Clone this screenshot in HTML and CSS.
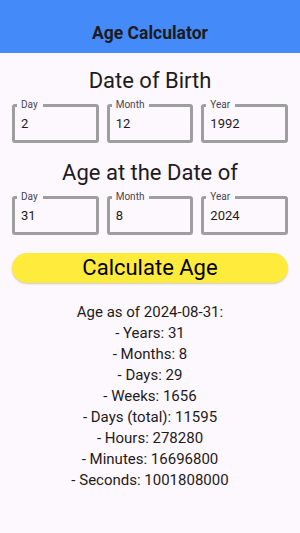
FILE: index.html
```html
<!DOCTYPE html>
<html lang="en">
<head>
  <meta charset="UTF-8" />
  <meta name="viewport" content="width=device-width, initial-scale=1.0"/>
  <title>Age Calculator</title>
  <link rel="stylesheet" href="styles.css">
</head>
<body>
  <header class="app-bar">
    <h1>Age Calculator</h1>
  </header>

  <main class="content">
    <h2 class="section-title">Date of Birth</h2>
    <div class="field-row">
      <div class="field">
        <label>Day</label>
        <input type="text" value="2">
      </div>
      <div class="field">
        <label>Month</label>
        <input type="text" value="12">
      </div>
      <div class="field">
        <label>Year</label>
        <input type="text" value="1992">
      </div>
    </div>

    <h2 class="section-title second">Age at the Date of</h2>
    <div class="field-row">
      <div class="field">
        <label>Day</label>
        <input type="text" value="31">
      </div>
      <div class="field">
        <label>Month</label>
        <input type="text" value="8">
      </div>
      <div class="field">
        <label>Year</label>
        <input type="text" value="2024">
      </div>
    </div>

    <div class="button-row">
      <button class="calc-btn">Calculate Age</button>
    </div>

    <div class="result">
      <p>Age as of 2024-08-31:</p>
      <p>- Years: 31</p>
      <p>- Months: 8</p>
      <p>- Days: 29</p>
      <p>- Weeks: 1656</p>
      <p>- Days (total): 11595</p>
      <p>- Hours: 278280</p>
      <p>- Minutes: 16696800</p>
      <p>- Seconds: 1001808000</p>
    </div>
  </main>
</body>
</html>
```

FILE: styles.css
```css
* {
  box-sizing: border-box;
}

body {
  margin: 0;
  font-family: Roboto, 'Noto Sans', sans-serif;
  background: #fdf7fe;
  color: #1d1b20;
  width: 300px;
  min-height: 533px;
}

.app-bar {
  background: #448af8;
  height: 53px;
  padding-top: 13px;
}

.app-bar h1 {
  margin: 0;
  text-align: center;
  font-size: 17.5px;
  font-weight: 700;
  line-height: 40px;
}

.section-title {
  margin: 14px 0 0;
  text-align: center;
  font-size: 22px;
  font-weight: 400;
  line-height: 28px;
}

.section-title.second {
  margin-top: 16px;
}

.field-row {
  display: flex;
  padding: 0 8px;
  margin-top: 9px;
}

.field {
  flex: 1;
  padding: 0 4px;
  position: relative;
}

.field input {
  display: block;
  width: 100%;
  height: 39px;
  border: 3px solid #9e9e9e;
  border-radius: 3px;
  background: transparent;
  font-family: inherit;
  font-size: 13px;
  color: #1d1b20;
  padding: 0 6px;
  outline: none;
}

.field label {
  position: absolute;
  left: 9px;
  top: -5px;
  padding: 0 5px 0 4px;
  font-size: 10px;
  line-height: 12px;
  color: #49454f;
  background: #fdf7fe;
}

.button-row {
  padding: 0 12px;
  margin-top: 18px;
}

.calc-btn {
  display: block;
  width: 100%;
  height: 30px;
  border: none;
  border-radius: 15px;
  background: #ffeb3b;
  color: #000;
  font-family: inherit;
  font-size: 22px;
  line-height: 30px;
  padding: 0;
  box-shadow: 0 1px 2px rgba(0,0,0,0.2);
}

.result {
  margin-top: 19px;
  text-align: center;
  font-size: 15px;
}

.result p {
  margin: 0;
  line-height: 21px;
}
```
